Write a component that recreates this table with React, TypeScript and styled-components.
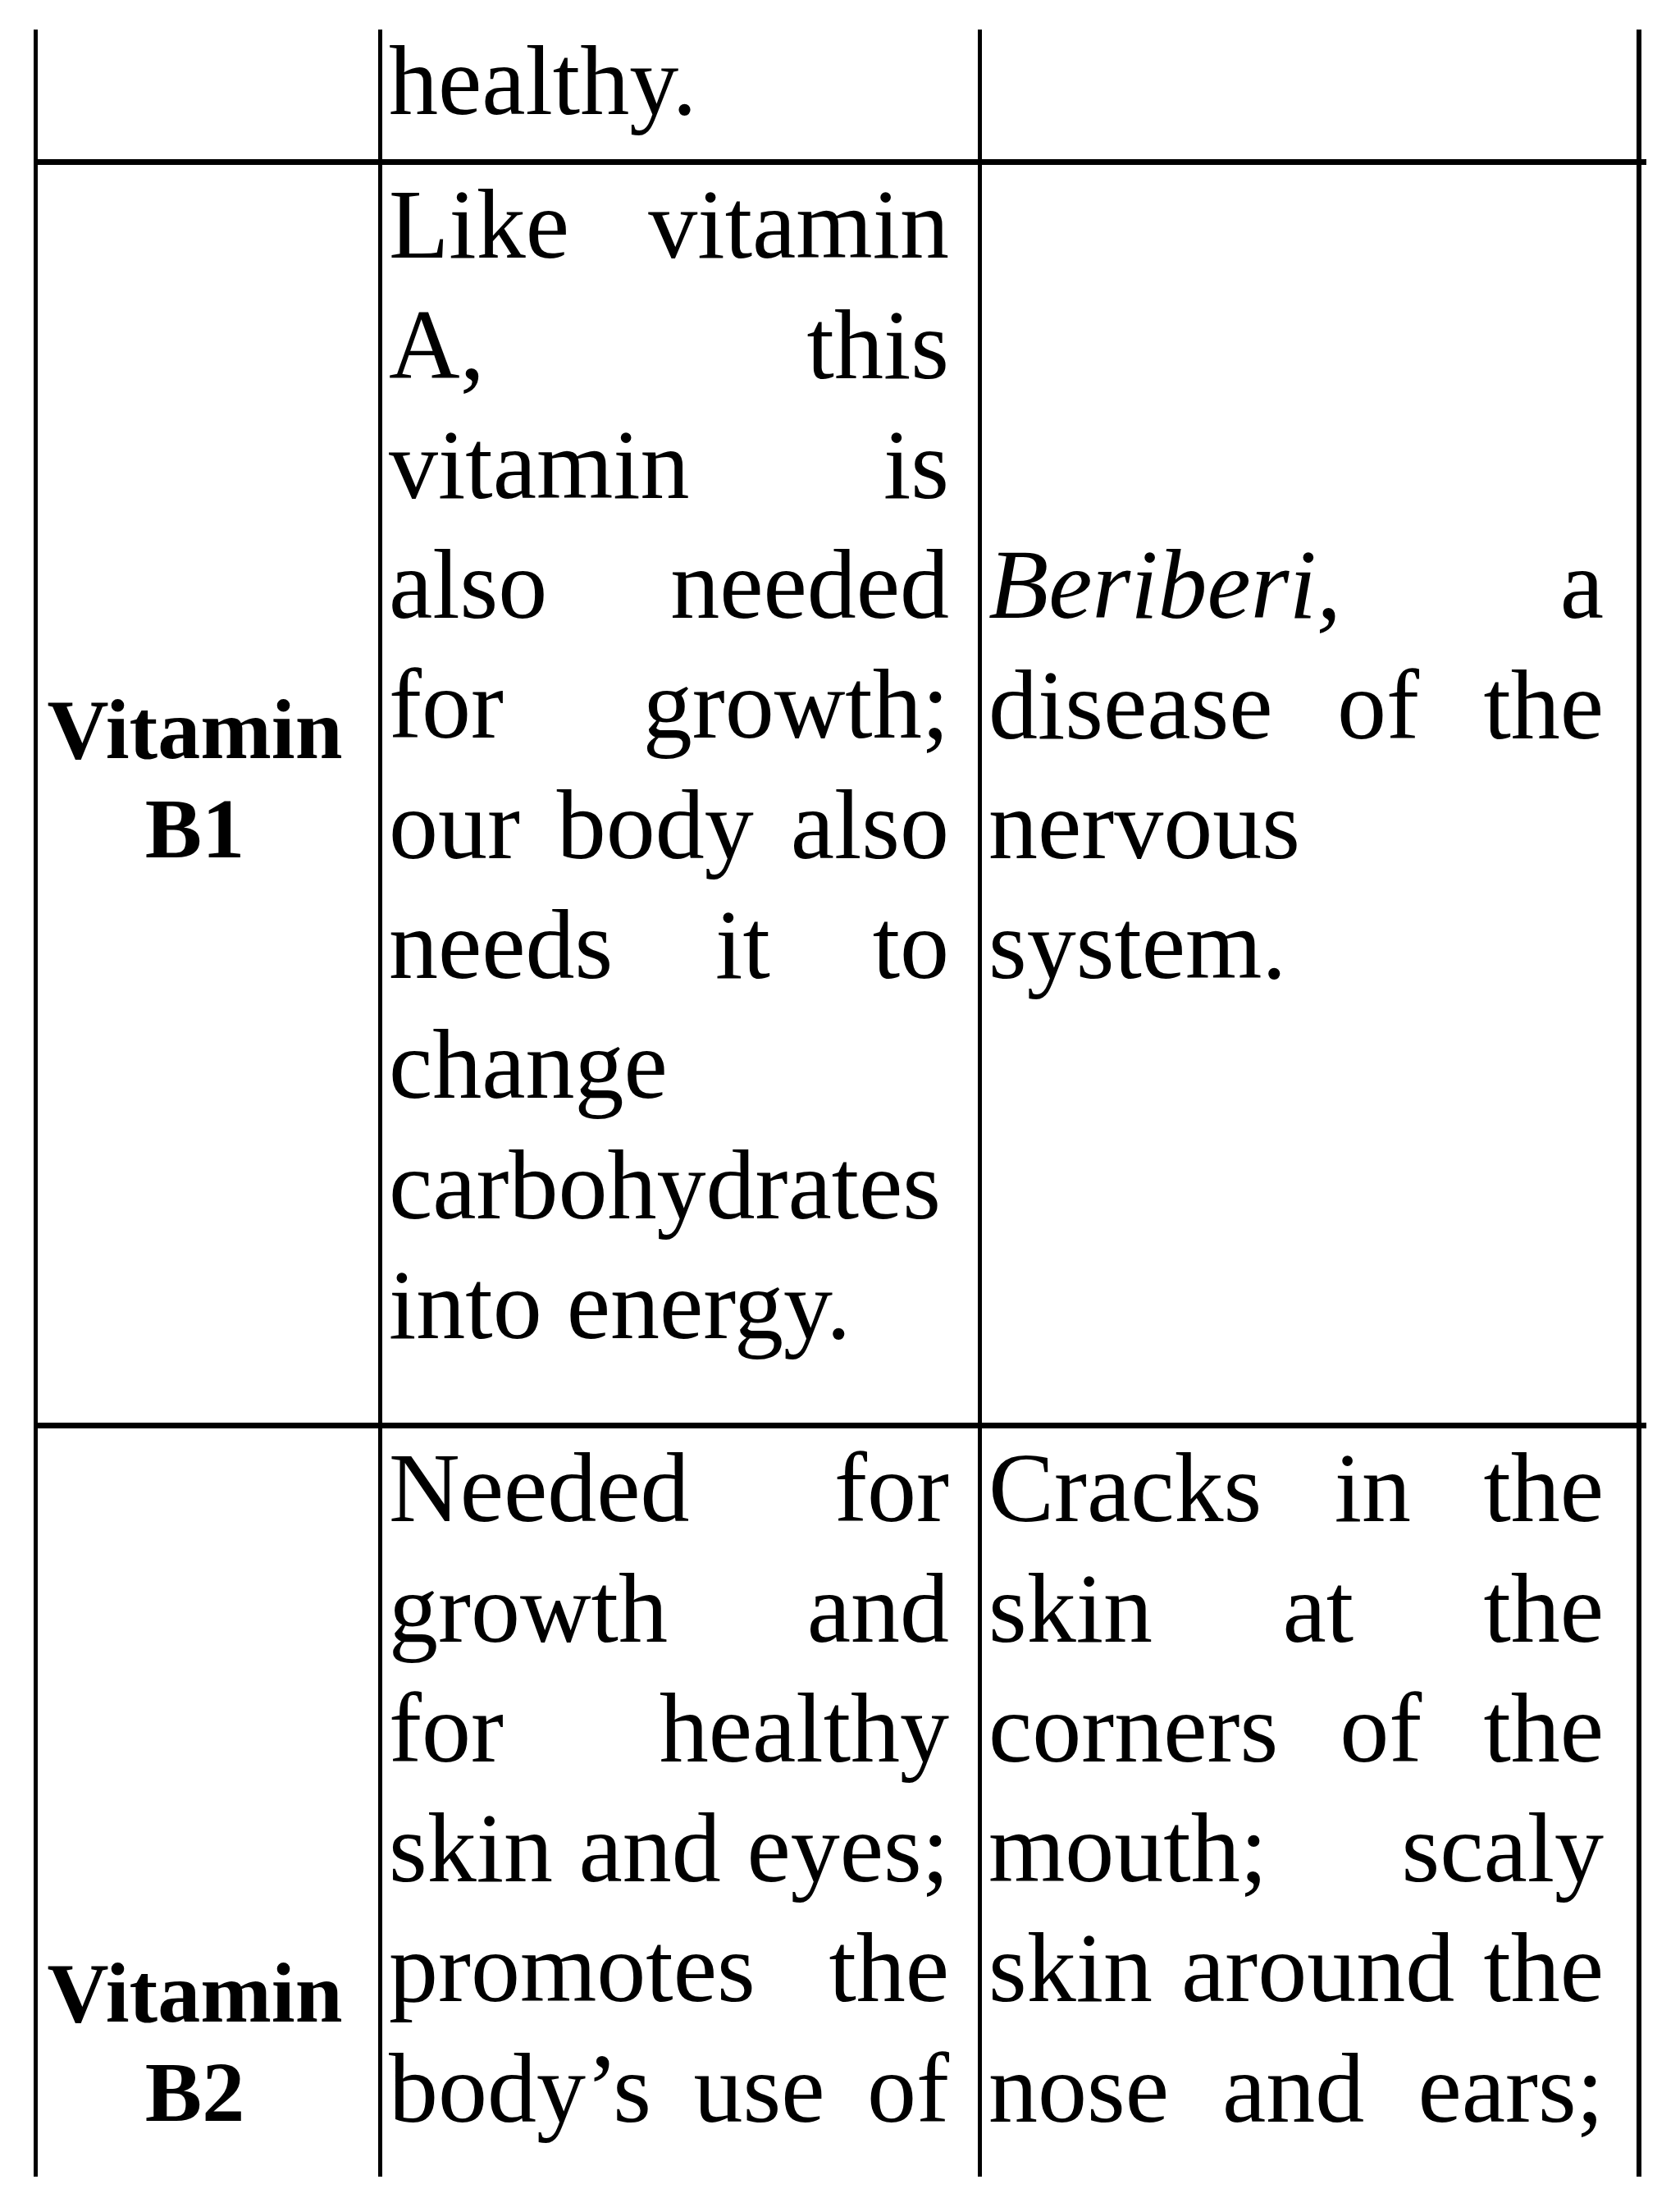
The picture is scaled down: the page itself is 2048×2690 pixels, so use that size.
import React from 'react'
import styled, { createGlobalStyle } from 'styled-components'

const GlobalStyle = createGlobalStyle`
  html, body {
    margin: 0;
    padding: 0;
    background: #fff;
  }
  body {
    font-family: "Liberation Serif", "Times New Roman", serif;
    color: #000;
  }
`

const Page = styled.div`
  width: 2048px;
  height: 2690px;
  box-sizing: border-box;
  padding-top: 36px;
  padding-left: 41px;
  background: #fff;
`

// the table runs on from the previous page and on to the next one,
// so the sheet cuts it off at both ends
const Sheet = styled.div`
  height: 2617px;
  overflow: hidden;
`

const Table = styled.div`
  margin-top: -10px;
  width: 1966px;
`

const Row = styled.div<{ $ruled?: boolean; $after: number }>`
  display: grid;
  grid-template-columns: 420px 731px 809px;
  padding-right: 6px;
  border-top: ${({ $ruled }) => ($ruled ? '7px solid #000' : '0')};

  & > * {
    padding-bottom: ${({ $after }) => $after}px;
  }
`

const NameCell = styled.div<{ $top?: number }>`
  box-sizing: border-box;
  border-left: 5px solid #000;
  padding-top: ${({ $top = 0 }) => $top}px;
  padding-left: 8px;
  padding-right: 40px;
  font-size: 104px;
  line-height: 121px;
  font-weight: bold;
  text-align: center;
`

const TextCell = styled.div<{ $closing?: boolean; $continues?: boolean }>`
  box-sizing: border-box;
  border-left: 5px solid #000;
  border-right: ${({ $closing }) => ($closing ? '6px solid #000' : '0')};
  padding-left: 8px;
  padding-right: ${({ $closing }) => ($closing ? 40 : 35)}px;
  font-size: 120px;
  line-height: 146.3px;
  text-align: justify;
  text-align-last: ${({ $continues }) => ($continues ? 'justify' : 'auto')};
`

const Centered = styled.div<{ $top: number }>`
  padding-top: ${({ $top }) => $top}px;
`

const Disease = styled.em`
  font-style: italic;
`

const App: React.FC = () => (
  <>
    <GlobalStyle />
    <Page>
      <Sheet>
        <Table>
          <Row $after={22}>
            <NameCell />
            <TextCell>healthy.</TextCell>
            <TextCell $closing />
          </Row>

          <Row $ruled $after={70}>
            <NameCell $top={627}>
              Vitamin
              <br />
              B1
            </NameCell>
            <TextCell>
              Like vitamin A, this vitamin is also needed for growth; our body also needs it to
              change carbohydrates into energy.
            </TextCell>
            <TextCell $closing>
              <Centered $top={439}>
                <Disease>Beriberi,</Disease> a disease of the nervous system.
              </Centered>
            </TextCell>
          </Row>

          <Row $ruled $after={70}>
            <NameCell $top={627}>
              Vitamin
              <br />
              B2
            </NameCell>
            <TextCell $continues>
              Needed for growth and for healthy skin and eyes; promotes the body’s use of
            </TextCell>
            <TextCell $closing $continues>
              Cracks in the skin at the corners of the mouth; scaly skin around the nose and ears;
            </TextCell>
          </Row>
        </Table>
      </Sheet>
    </Page>
  </>
)

export default App
